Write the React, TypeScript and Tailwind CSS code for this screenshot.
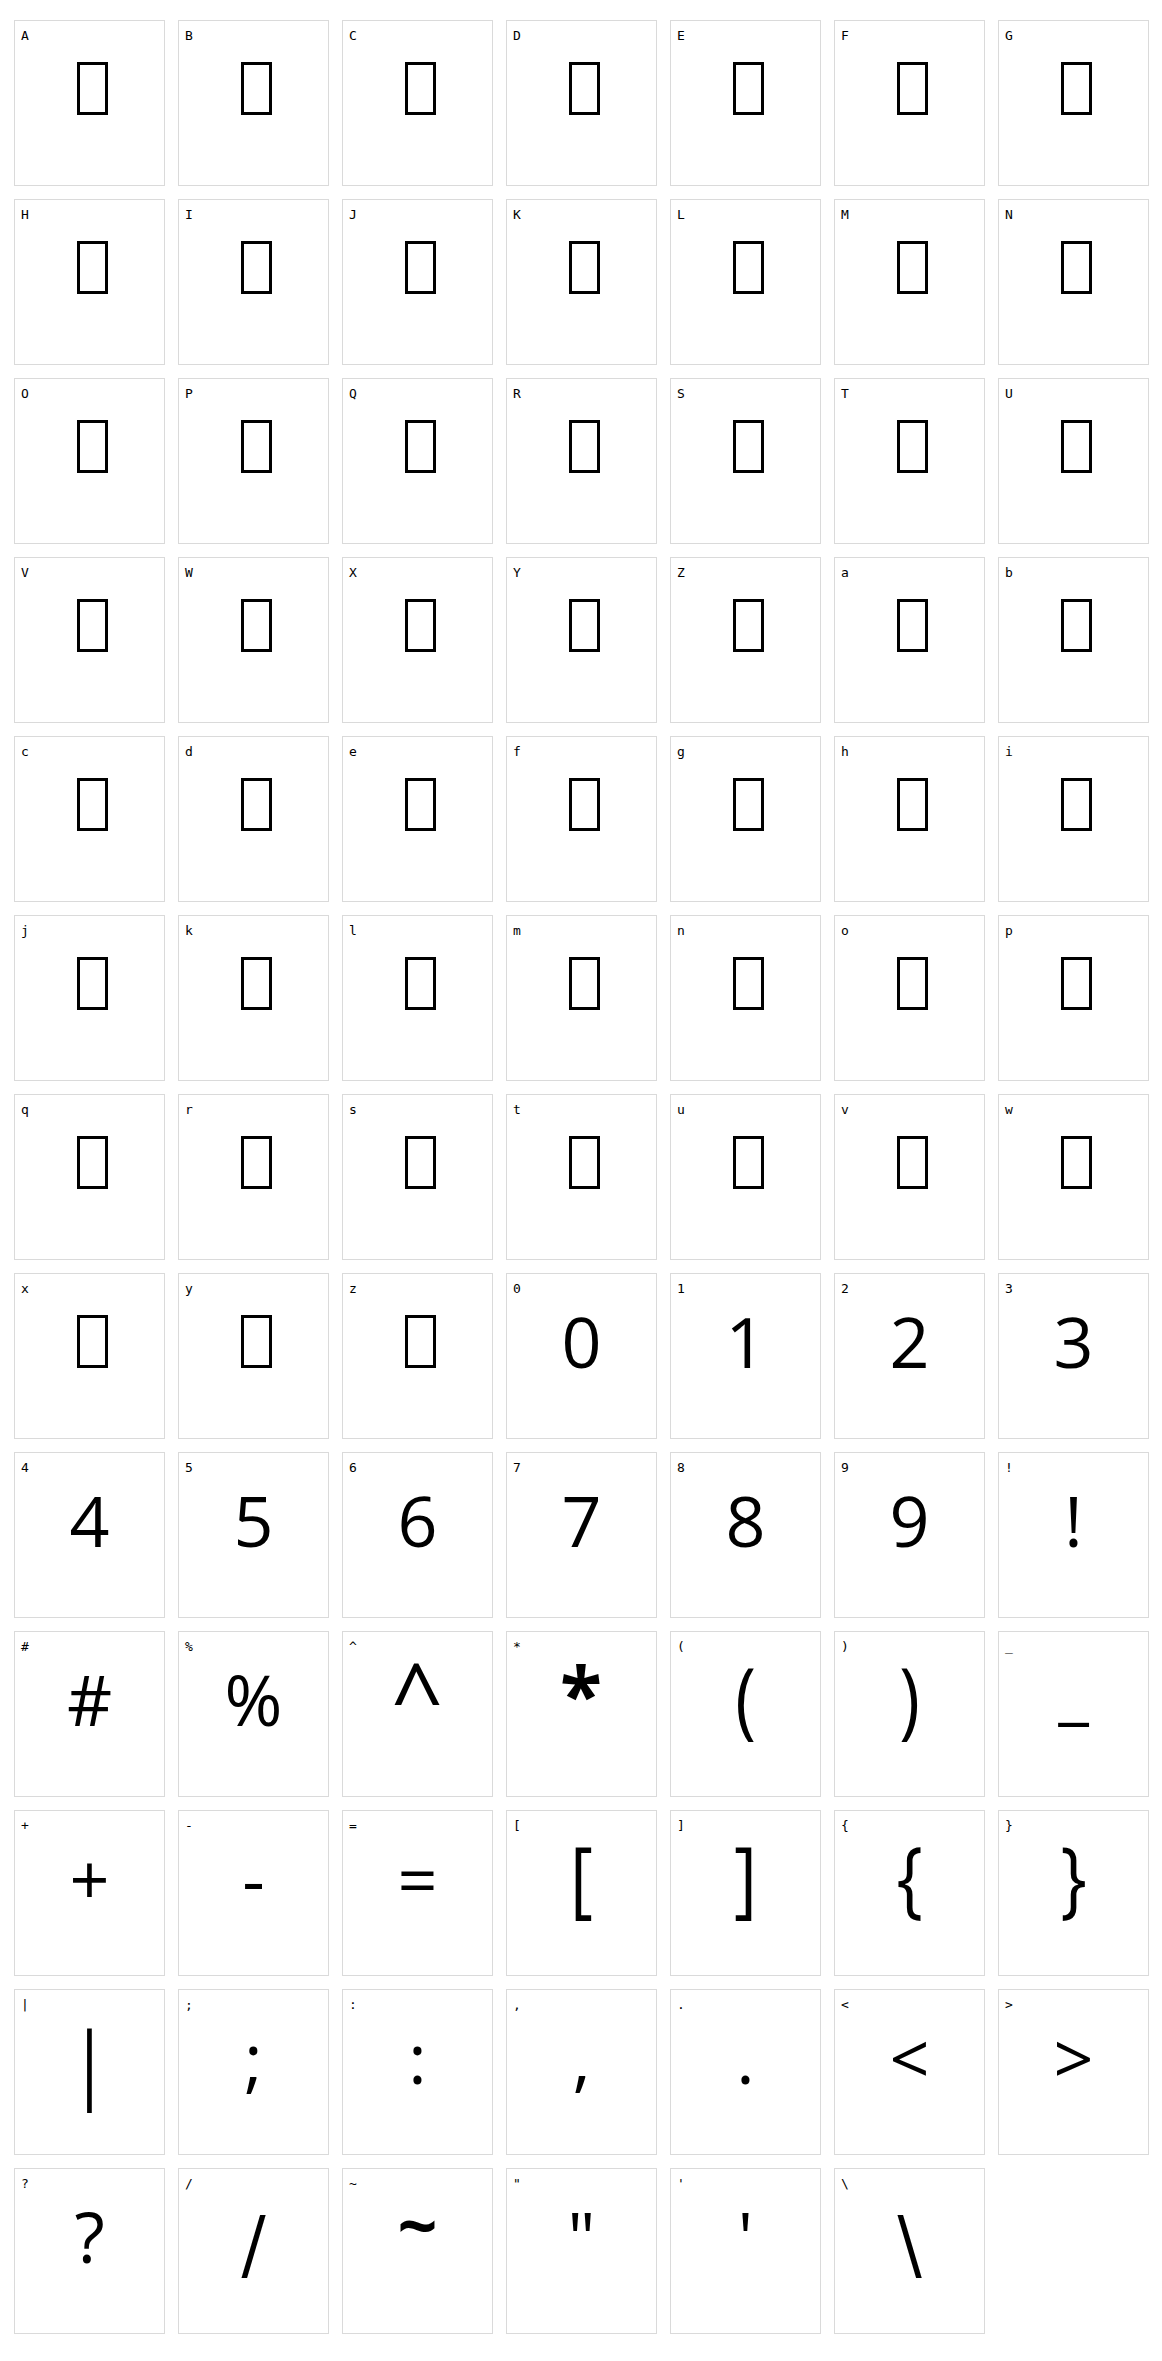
import React from 'react';

const letters = 'ABCDEFGHIJKLMNOPQRSTUVWXYZabcdefghijklmnopqrstuvwxyz'.split('');
const symbols = '0123456789!#%^*()_+-=[]{}|;:,.<>?/~"\'\\'.split('');

const tweaks: Record<string, string> = {
    '(': 'scale-y-[1.2] translate-y-[-2px]',
    ')': 'scale-y-[1.2] translate-y-[-2px]',
    '[': 'scale-y-[1.2] translate-y-[-2px]',
    ']': 'scale-y-[1.2] translate-y-[-2px]',
    '{': 'scale-y-[1.2] translate-y-[-2px]',
    '}': 'scale-y-[1.2] translate-y-[-2px]',
    '|': 'scale-y-[1.2] translate-y-[4px]',
    '/': 'scale-y-[1.25] translate-y-[8px]',
    '\\': 'scale-y-[1.25] translate-y-[8px]',
    '_': 'translate-y-[-9px]',
    '^': 'scale-[1.3] translate-y-[-4px]',
    '*': 'scale-[1.1] translate-y-[-6px] font-bold',
    '~': 'translate-y-[-12px] font-bold',
};

function Tofu() {
    return (
        <div className="flex justify-center pl-[6px] mt-[19px]">
            <div className="w-[31px] h-[53px] border-[3px] border-black" />
        </div>
    );
}

function Cell({ ch, missing }: { ch: string; missing: boolean }) {
    return (
        <div className="h-[166px] border border-[#dadada] bg-white flex flex-col overflow-hidden">
            <div className="px-[6px] pt-[8px] h-[22px] text-[13px] leading-[14px] text-black font-['DejaVu_Sans_Mono',monospace]">
                {ch}
            </div>
            {missing ? (
                <Tofu />
            ) : (
                <div className="mt-[10px] text-center text-[70px] leading-none text-black font-['Open_Sans',sans-serif]">
                    <span className={`inline-block origin-center ${tweaks[ch] ?? ''}`}>{ch}</span>
                </div>
            )}
        </div>
    );
}

export default function App() {
    return (
        <div className="bg-white min-h-[2361px] pl-[14px] pr-[13px] pt-[20px] pb-[27px]">
            <div className="grid grid-cols-7 gap-[13px]">
                {letters.map((c) => (
                    <Cell key={c} ch={c} missing />
                ))}
                {symbols.map((c) => (
                    <Cell key={c} ch={c} missing={false} />
                ))}
            </div>
        </div>
    );
}
